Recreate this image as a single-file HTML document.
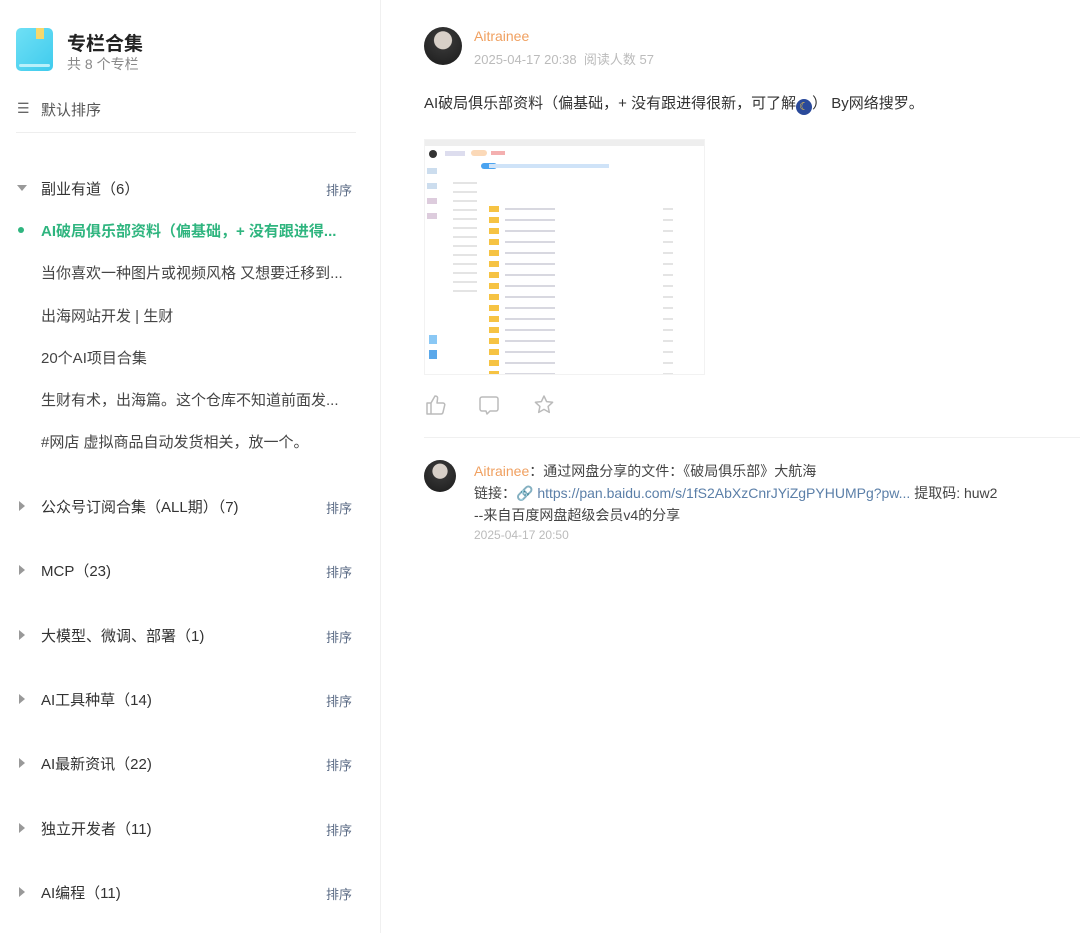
<!DOCTYPE html>
<html><head><meta charset="utf-8"><style>
*{margin:0;padding:0;box-sizing:border-box}
body{width:1080px;height:933px;background:#fff;font-family:"Liberation Sans","Noto Sans CJK SC",sans-serif;color:#333;position:relative;overflow:hidden}
.a{position:absolute;white-space:nowrap}
.side{position:absolute;left:0;top:0;width:381px;height:933px;border-right:1px solid #f0f0f0}
.g{font-size:15px;color:#333;left:41px}
.s{font-size:13px;color:#5b6b85;left:326px}
.c{left:19px;width:0;height:0;border-top:5px solid transparent;border-bottom:5px solid transparent;border-left:6px solid #999}
.sub{font-size:15px;color:#444;left:41px}
</style></head><body>
<div class="side">
  <div class="a" style="left:16px;top:28px;width:37px;height:43px;border-radius:5px;background:linear-gradient(135deg,#6fe0f5,#3fcbed)"></div>
  <div class="a" style="left:36px;top:28px;width:8px;height:11px;background:#f6d86b"></div>
  <div class="a" style="left:19px;top:64px;width:31px;height:3px;background:#b9f0fa;border-radius:2px"></div>
  <div class="a" style="left:67px;top:29px;font-size:19px;font-weight:bold;color:#222">专栏合集</div>
  <div class="a" style="left:67px;top:54px;font-size:14px;color:#888">共 8 个专栏</div>
  <div class="a" style="left:17px;top:100px;font-size:14px;color:#666">☰</div>
  <div class="a" style="left:41px;top:99px;font-size:15px;color:#555">默认排序</div>
  <div class="a" style="left:16px;top:132px;width:340px;height:1px;background:#eee"></div>

  <div class="a" style="left:17px;top:185px;width:0;height:0;border-left:5px solid transparent;border-right:5px solid transparent;border-top:6px solid #999"></div>
  <div class="a g" style="top:178px">副业有道（6）</div><div class="a s" style="top:180px">排序</div>
  <div class="a" style="left:18px;top:227px;width:6px;height:6px;border-radius:50%;background:#2fb57f"></div>
  <div class="a" style="left:41px;top:220px;font-size:15px;font-weight:bold;color:#2fb57f">AI破局俱乐部资料（偏基础，+ 没有跟进得...</div>
  <div class="a sub" style="top:262px">当你喜欢一种图片或视频风格 又想要迁移到...</div>
  <div class="a sub" style="top:305px">出海网站开发 | 生财</div>
  <div class="a sub" style="top:347px">20个AI项目合集</div>
  <div class="a sub" style="top:389px">生财有术，出海篇。这个仓库不知道前面发...</div>
  <div class="a sub" style="top:431px">#网店 虚拟商品自动发货相关，放一个。</div>

  <div class="a c" style="top:501px"></div><div class="a g" style="top:496px">公众号订阅合集（ALL期）（7)</div><div class="a s" style="top:498px">排序</div>
  <div class="a c" style="top:565px"></div><div class="a g" style="top:560px">MCP（23)</div><div class="a s" style="top:562px">排序</div>
  <div class="a c" style="top:630px"></div><div class="a g" style="top:625px">大模型、微调、部署（1)</div><div class="a s" style="top:627px">排序</div>
  <div class="a c" style="top:694px"></div><div class="a g" style="top:689px">AI工具种草（14)</div><div class="a s" style="top:691px">排序</div>
  <div class="a c" style="top:758px"></div><div class="a g" style="top:753px">AI最新资讯（22)</div><div class="a s" style="top:755px">排序</div>
  <div class="a c" style="top:823px"></div><div class="a g" style="top:818px">独立开发者（11)</div><div class="a s" style="top:820px">排序</div>
  <div class="a c" style="top:887px"></div><div class="a g" style="top:882px">AI编程（11)</div><div class="a s" style="top:884px">排序</div>
</div>

<div class="a" style="left:424px;top:27px;width:38px;height:38px;border-radius:50%;background:radial-gradient(circle at 50% 35%,#d8d0c8 0 28%,#333 30%,#1a1a1a 100%)"></div>
<div class="a" style="left:474px;top:28px;font-size:14px;color:#f0a060">Aitrainee</div>
<div class="a" style="left:474px;top:49px;font-size:13px;color:#bbb">2025-04-17 20:38 &nbsp;阅读人数 57</div>
<div class="a" style="left:424px;top:92px;font-size:15px;color:#333">AI破局俱乐部资料（偏基础，+ 没有跟进得很新，可了解<span style="display:inline-block;width:16px;height:16px;border-radius:50%;background:#2a4a9a;vertical-align:-2px;color:#f5c542;font-size:11px;text-align:center;line-height:16px">☾</span>） By网络搜罗。</div>

<div class="a" style="left:424px;top:139px;width:281px;height:236px;background:#fff;border:1px solid #f2f2f2;overflow:hidden">
  <div class="a" style="left:0;top:0;width:281px;height:6px;background:#eee"></div>
  <div class="a" style="left:4px;top:10px;width:8px;height:8px;border-radius:50%;background:#333"></div>
  <div class="a" style="left:20px;top:11px;width:20px;height:5px;background:#dde"></div>
  <div class="a" style="left:46px;top:10px;width:16px;height:6px;border-radius:3px;background:#fbd9b8"></div>
  <div class="a" style="left:66px;top:11px;width:14px;height:4px;background:#f4b0b0"></div>
  <div class="a" style="left:2px;top:28px;width:10px;height:60px;background:linear-gradient(#cde 0 10%,#fff 10% 25%,#cde 25% 35%,#fff 35% 50%,#dcd 50% 60%,#fff 60% 75%,#dcd 75% 85%,#fff 85%)"></div>
  <div class="a" style="left:56px;top:23px;width:16px;height:6px;border-radius:3px;background:#4aa3f0"></div>
  <div class="a" style="left:64px;top:24px;width:120px;height:4px;background:#cfe3f8"></div>
  <div class="a" style="left:28px;top:36px;width:24px;height:120px;background:repeating-linear-gradient(#fff 0 6px,#e4e4e4 6px 8px,#fff 8px 9px)"></div>
  <div class="a" style="left:64px;top:64px;width:10px;height:172px;background:repeating-linear-gradient(#fff 0 2px,#f6c343 2px 8px,#fff 8px 11px)"></div>
  <div class="a" style="left:80px;top:64px;width:50px;height:172px;background:repeating-linear-gradient(#fff 0 4px,#d8d8e0 4px 6px,#fff 6px 11px)"></div>
  <div class="a" style="left:238px;top:64px;width:10px;height:172px;background:repeating-linear-gradient(#fff 0 4px,#e4e4e4 4px 6px,#fff 6px 11px)"></div>
  <div class="a" style="left:4px;top:195px;width:8px;height:30px;background:linear-gradient(#8ac8f5 0 30%,#fff 30% 50%,#5aa8ea 50% 80%,#fff 80%)"></div>
</div>

<svg class="a" style="left:424px;top:393px" width="140" height="24" viewBox="0 0 140 24" fill="none" stroke="#bbb" stroke-width="1.5" stroke-linejoin="round">
  <path d="M3 10h4v11H3z M7 10l4-7c2 0 3 1 2.5 3L13 10h6c1.2 0 2 1 1.7 2.2l-1.8 7.5c-.3.8-1 1.3-1.8 1.3H7"/>
  <path d="M58 4h14a2 2 0 0 1 2 2v10a2 2 0 0 1-2 2h-6l-3 3-1-3h-4a2 2 0 0 1-2-2V6a2 2 0 0 1 2-2z"/>
  <path d="M120 3l2.6 5.6 6 .7-4.5 4.1 1.2 6-5.3-3-5.3 3 1.2-6-4.5-4.1 6-.7z"/>
</svg>

<div class="a" style="left:424px;top:437px;width:656px;height:1px;background:#f0f0f0"></div>

<div class="a" style="left:424px;top:460px;width:32px;height:32px;border-radius:50%;background:radial-gradient(circle at 50% 35%,#d8d0c8 0 28%,#333 30%,#1a1a1a 100%)"></div>
<div class="a" style="left:474px;top:461px;font-size:14px;color:#444"><span style="color:#f0a060">Aitrainee</span>：通过网盘分享的文件：《破局俱乐部》大航海</div>
<div class="a" style="left:474px;top:483px;font-size:14px;color:#444">链接：<span style="color:#5b7fa8">🔗 https://pan.baidu.com/s/1fS2AbXzCnrJYiZgPYHUMPg?pw...</span> 提取码: huw2</div>
<div class="a" style="left:474px;top:505px;font-size:14px;color:#444">--来自百度网盘超级会员v4的分享</div>
<div class="a" style="left:474px;top:528px;font-size:12px;color:#bbb">2025-04-17 20:50</div>
</body></html>
